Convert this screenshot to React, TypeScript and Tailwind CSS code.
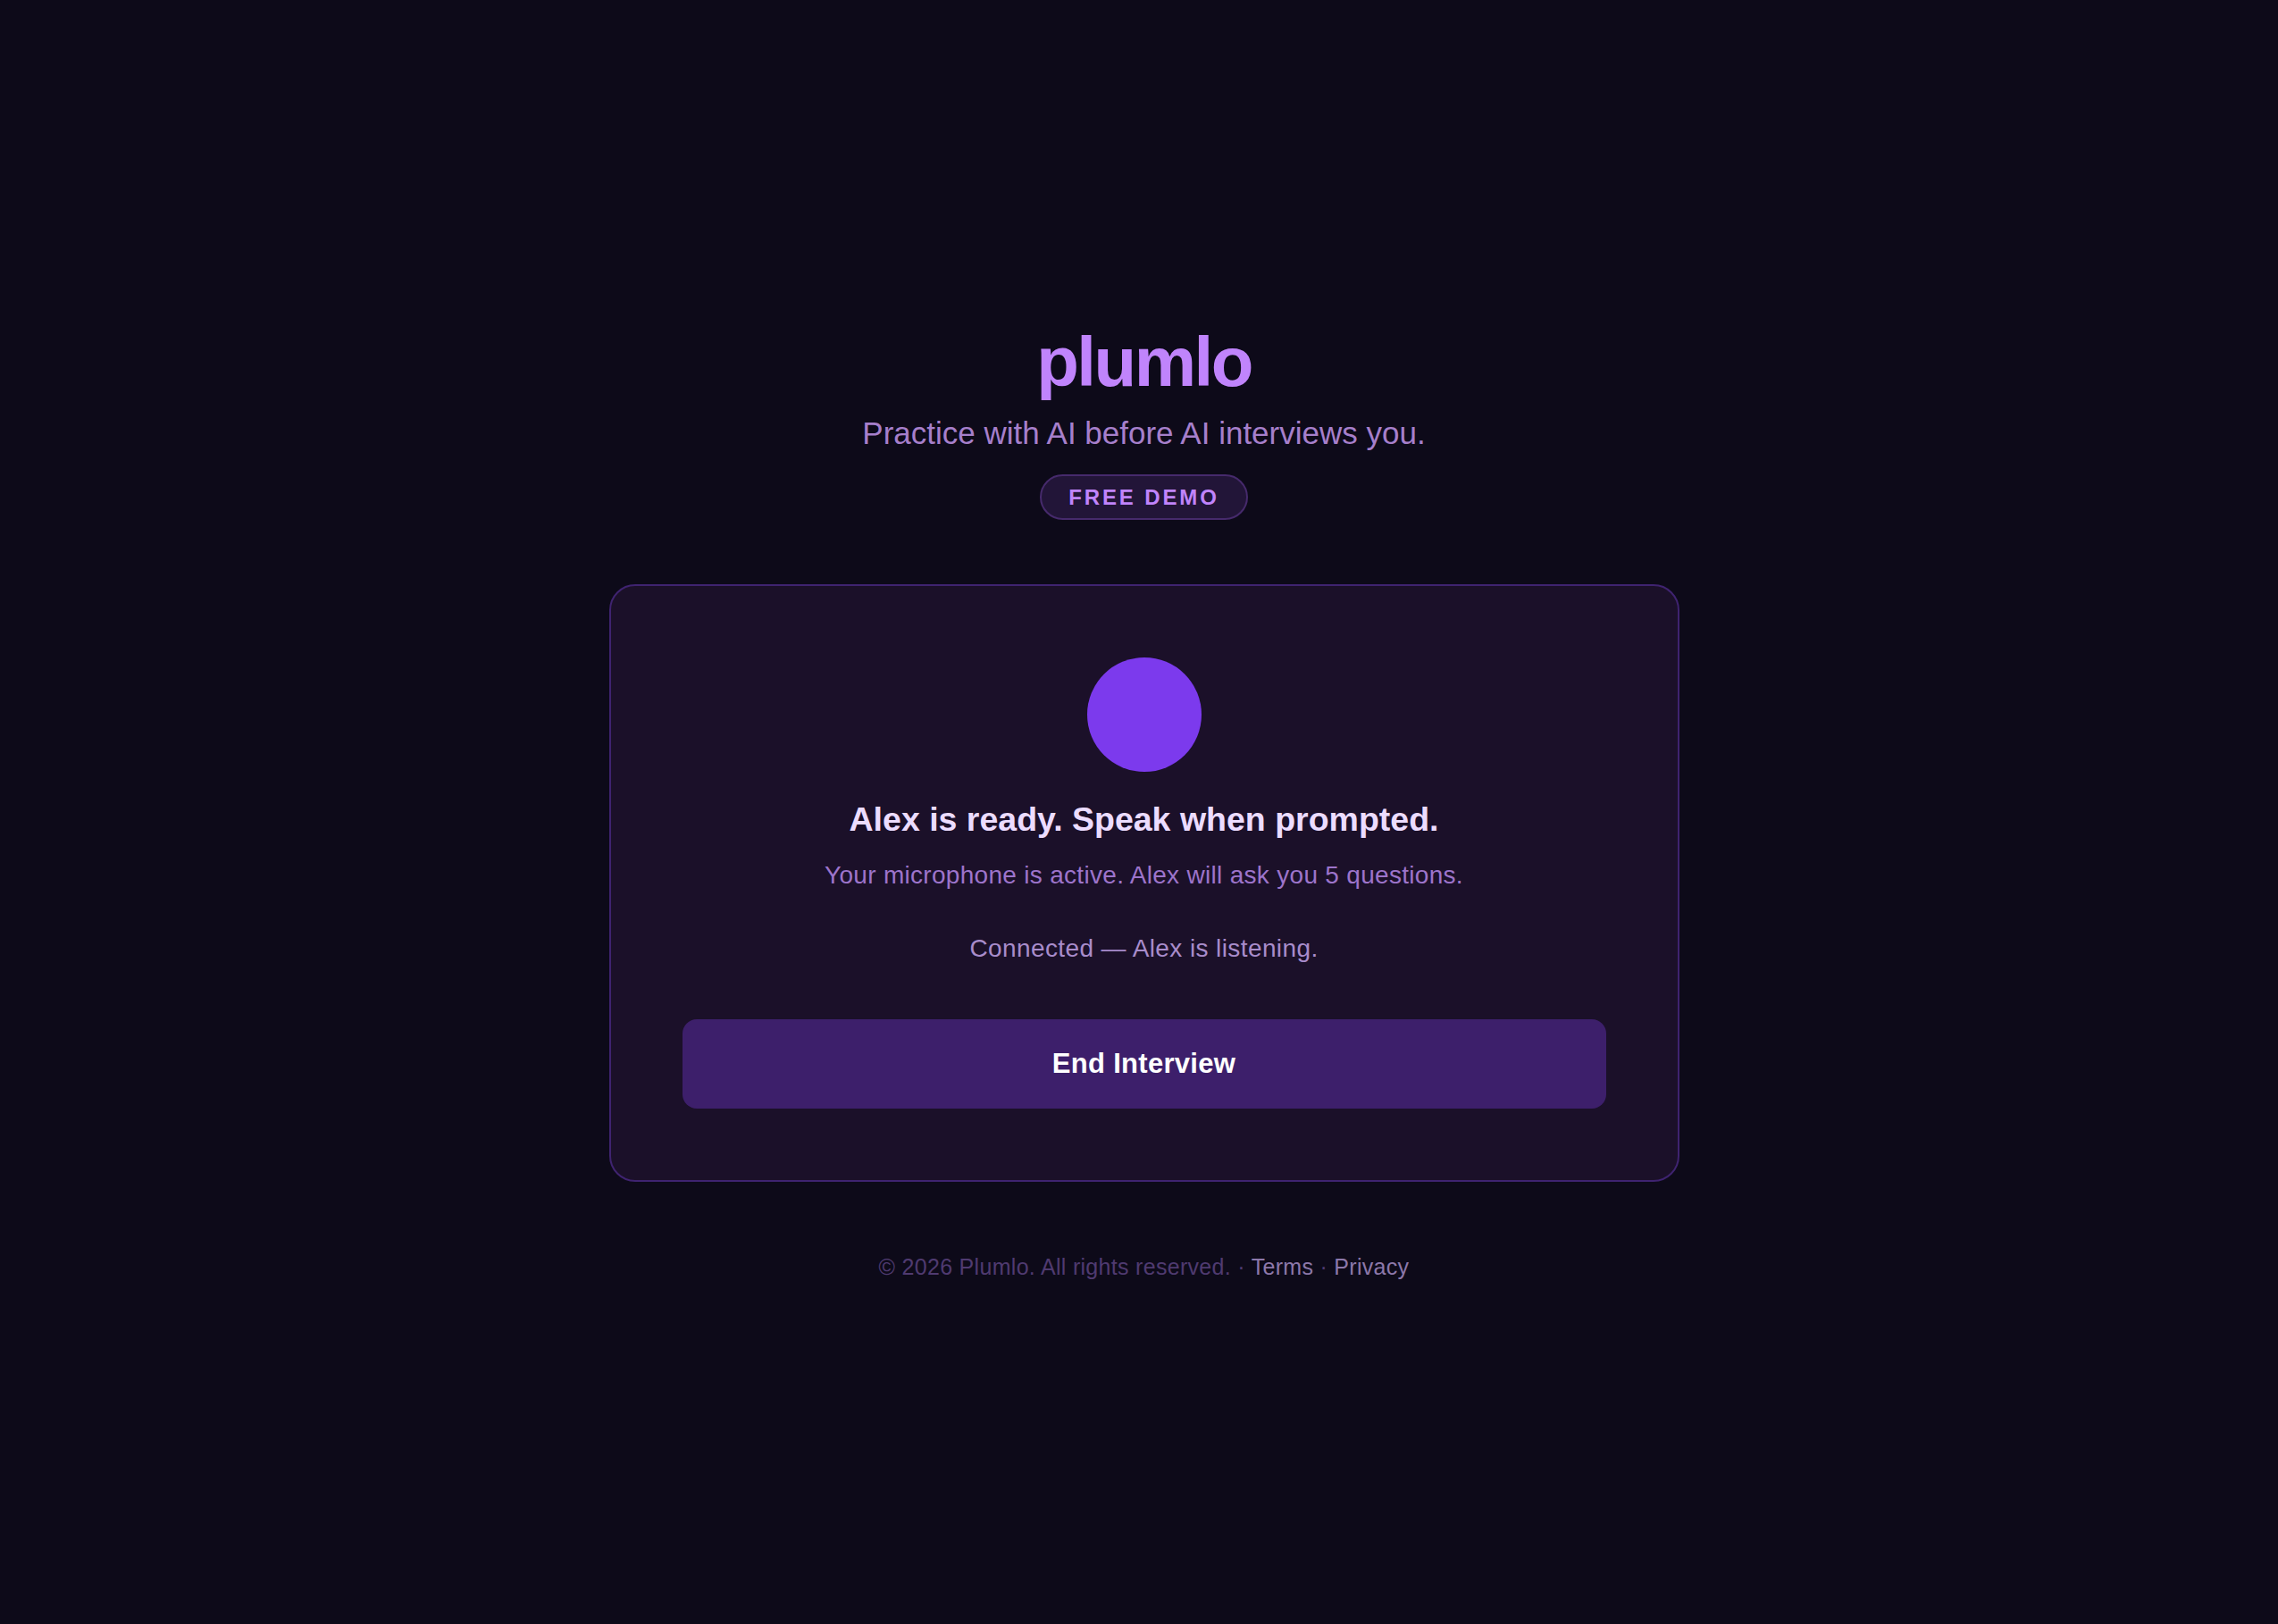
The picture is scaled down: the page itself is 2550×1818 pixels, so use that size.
export default function App() {
  return (
    <div
      className="min-h-[1818px] w-full bg-[#0d0a19] pl-[11px] flex flex-col items-center"
      style={{ fontFamily: '"Liberation Sans", Arial, Helvetica, sans-serif' }}
    >
      {/* Header */}
      <h1 className="mt-[366px] text-[78px] leading-none font-bold tracking-[-2.5px] text-[#c084fc]">
        plumlo
      </h1>
      <p className="mt-[21px] text-[35px] leading-[40px] text-[#a67fcb]">
        Practice with AI before AI interviews you.
      </p>
      <span className="mt-[26px] rounded-full border-2 border-[#462a6c] bg-[#221538] px-[30px] py-[10px] text-[24px] leading-[27px] font-bold tracking-[0.12em] text-[#c084fc]">
        FREE DEMO
      </span>

      {/* Interview card */}
      <div className="mt-[72px] w-[1198px] rounded-[29px] border-2 border-[#3f2370] bg-[#1b1029] px-[80px] pt-[80px] pb-[80px] flex flex-col items-center">
        <div className="h-[128px] w-[128px] rounded-full bg-[#7c3aed]" />
        <h2 className="mt-[31px] text-[37.5px] leading-[44px] font-bold text-[#ecdcff]">
          Alex is ready. Speak when prompted.
        </h2>
        <p className="mt-[25px] text-[28px] leading-[32px] tracking-[0.3px] text-[#9d74cb]">
          Your microphone is active. Alex will ask you 5 questions.
        </p>
        <p className="mt-[50px] text-[28px] leading-[32px] tracking-[0.4px] text-[#a88ccb]">
          Connected — Alex is listening.
        </p>
        <button className="mt-[63px] h-[100px] w-full rounded-[16px] bg-[#3d1f6b] text-[31px] font-bold tracking-[0.3px] text-white">
          End Interview
        </button>
      </div>

      {/* Footer */}
      <p className="mt-[81px] text-[25px] leading-[28px] tracking-[0.3px] text-[#4f3a70]">
        © 2026 Plumlo. All rights reserved. ·{" "}
        <a className="text-[#8c78aa]">Terms</a> ·{" "}
        <a className="text-[#8c78aa]">Privacy</a>
      </p>
    </div>
  );
}
